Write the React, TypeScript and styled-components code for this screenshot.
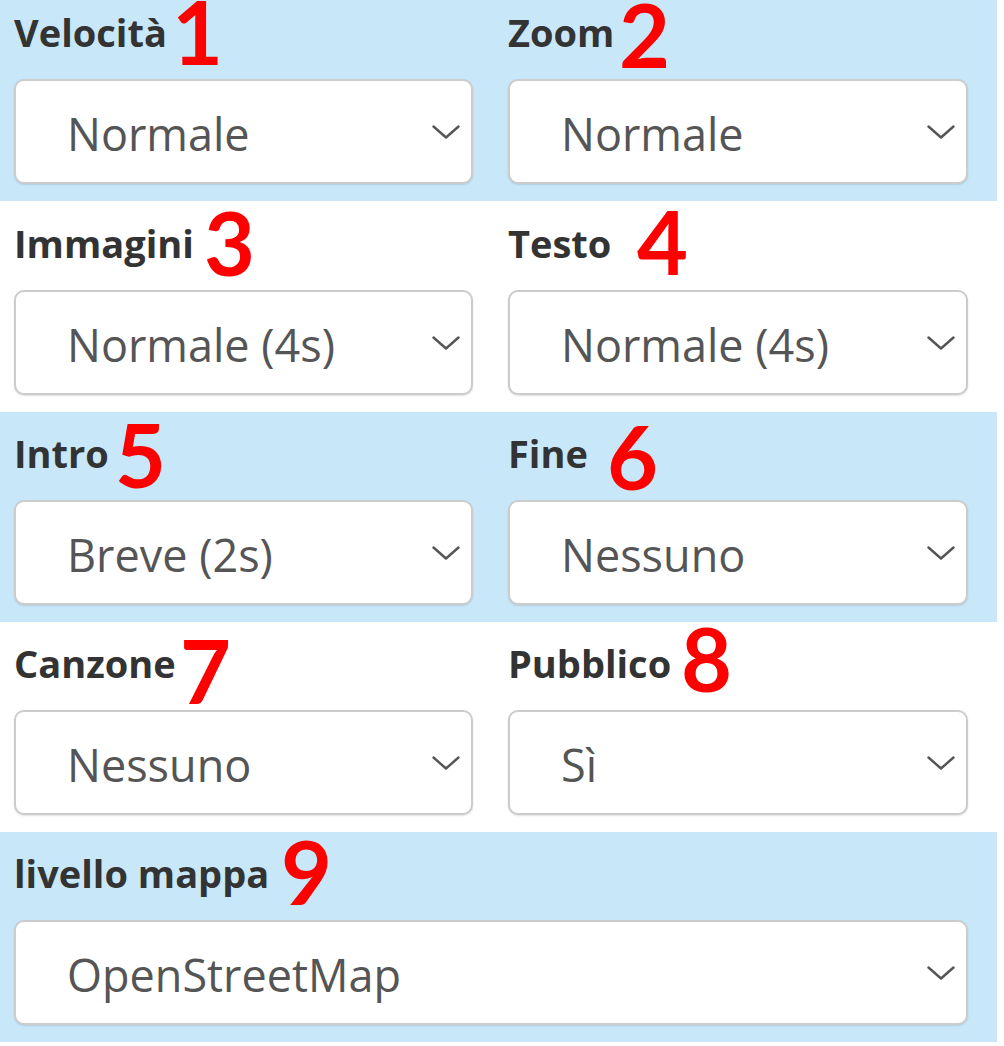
import React from 'react';
import styled, { createGlobalStyle } from 'styled-components';

const GlobalStyle = createGlobalStyle`
    html, body {
        margin: 0;
        padding: 0;
        background: #ffffff;
    }
    body {
        font-family: 'Open Sans', 'Noto Sans', sans-serif;
    }
`;

const Page = styled.div`
    width: 997px;
    display: flex;
    flex-direction: column;
    overflow: hidden;
`;

const Band = styled.section<{ $tinted: boolean }>`
    background: ${(p) => (p.$tinted ? '#c8e8f9' : '#ffffff')};
    padding: 0 29px 17px 14px;
    display: grid;
    grid-template-columns: 459px 460px;
    column-gap: 35px;
`;

const Field = styled.div<{ $wide?: boolean }>`
    position: relative;
    grid-column: ${(p) => (p.$wide ? '1 / -1' : 'auto')};
`;

const Label = styled.div<{ $height: number }>`
    height: ${(p) => p.$height}px;
    box-sizing: border-box;
    display: flex;
    align-items: flex-end;
    padding-bottom: 28px;
    font-size: 38px;
    line-height: 1;
    font-weight: 700;
    color: #333333;
    white-space: nowrap;
`;

const SelectBox = styled.div`
    height: 105px;
    box-sizing: border-box;
    border: 2px solid #cccccc;
    border-radius: 10px;
    background: #ffffff;
    box-shadow: 0 1px 2px rgba(0, 0, 0, 0.12);
    display: flex;
    align-items: center;
    justify-content: space-between;
    padding: 0 11px 0 51px;
`;

const Value = styled.span`
    font-size: 45px;
    line-height: 1;
    padding-top: 4px;
    color: #555555;
    white-space: nowrap;
`;

// red annotation numbers drawn over the form
const Marker = styled.span<{ $x: number; $y: number }>`
    position: absolute;
    left: ${(p) => p.$x}px;
    top: ${(p) => p.$y}px;
    font-family: Lato, 'Open Sans', sans-serif;
    font-weight: 700;
    font-size: 88px;
    line-height: 0.7;
    color: #ff0000;
    pointer-events: none;
`;

const Chevron: React.FC = () => (
    <svg width="28" height="14" viewBox="0 0 28 14" fill="none">
        <polyline points="1.5,1.5 14,12.5 26.5,1.5" stroke="#555555" strokeWidth="2.4" strokeLinecap="round" strokeLinejoin="round" />
    </svg>
);

type FieldDef = { label: string; value: string; n: string; x: number; y: number; wide?: boolean };
type RowDef = { tinted: boolean; labelHeight: number; fields: FieldDef[] };

const rows: RowDef[] = [
    {
        tinted: true,
        labelHeight: 79,
        fields: [
            { label: 'Velocità', value: 'Normale', n: '1', x: 158, y: 1 },
            { label: 'Zoom', value: 'Normale', n: '2', x: 111, y: 4 },
        ],
    },
    {
        tinted: false,
        labelHeight: 89,
        fields: [
            { label: 'Immagini', value: 'Normale (4s)', n: '3', x: 190, y: 11 },
            { label: 'Testo', value: 'Normale (4s)', n: '4', x: 129, y: 10 },
        ],
    },
    {
        tinted: true,
        labelHeight: 88,
        fields: [
            { label: 'Intro', value: 'Breve (2s)', n: '5', x: 101, y: 12 },
            { label: 'Fine', value: 'Nessuno', n: '6', x: 99, y: 14 },
        ],
    },
    {
        tinted: false,
        labelHeight: 88,
        fields: [
            { label: 'Canzone', value: 'Nessuno', n: '7', x: 166, y: 18 },
            { label: 'Pubblico', value: 'Sì', n: '8', x: 173, y: 6 },
        ],
    },
    {
        tinted: true,
        labelHeight: 88,
        fields: [{ label: 'livello mappa', value: 'OpenStreetMap', n: '9', x: 267, y: 9, wide: true }],
    },
];

export default function App() {
    return (
        <>
            <GlobalStyle />
            <Page>
                {rows.map((row, i) => (
                    <Band key={i} $tinted={row.tinted}>
                        {row.fields.map((f) => (
                            <Field key={f.label} $wide={f.wide}>
                                <Label $height={row.labelHeight}>{f.label}</Label>
                                <SelectBox>
                                    <Value>{f.value}</Value>
                                    <Chevron />
                                </SelectBox>
                                <Marker $x={f.x} $y={f.y}>{f.n}</Marker>
                            </Field>
                        ))}
                    </Band>
                ))}
            </Page>
        </>
    );
}
